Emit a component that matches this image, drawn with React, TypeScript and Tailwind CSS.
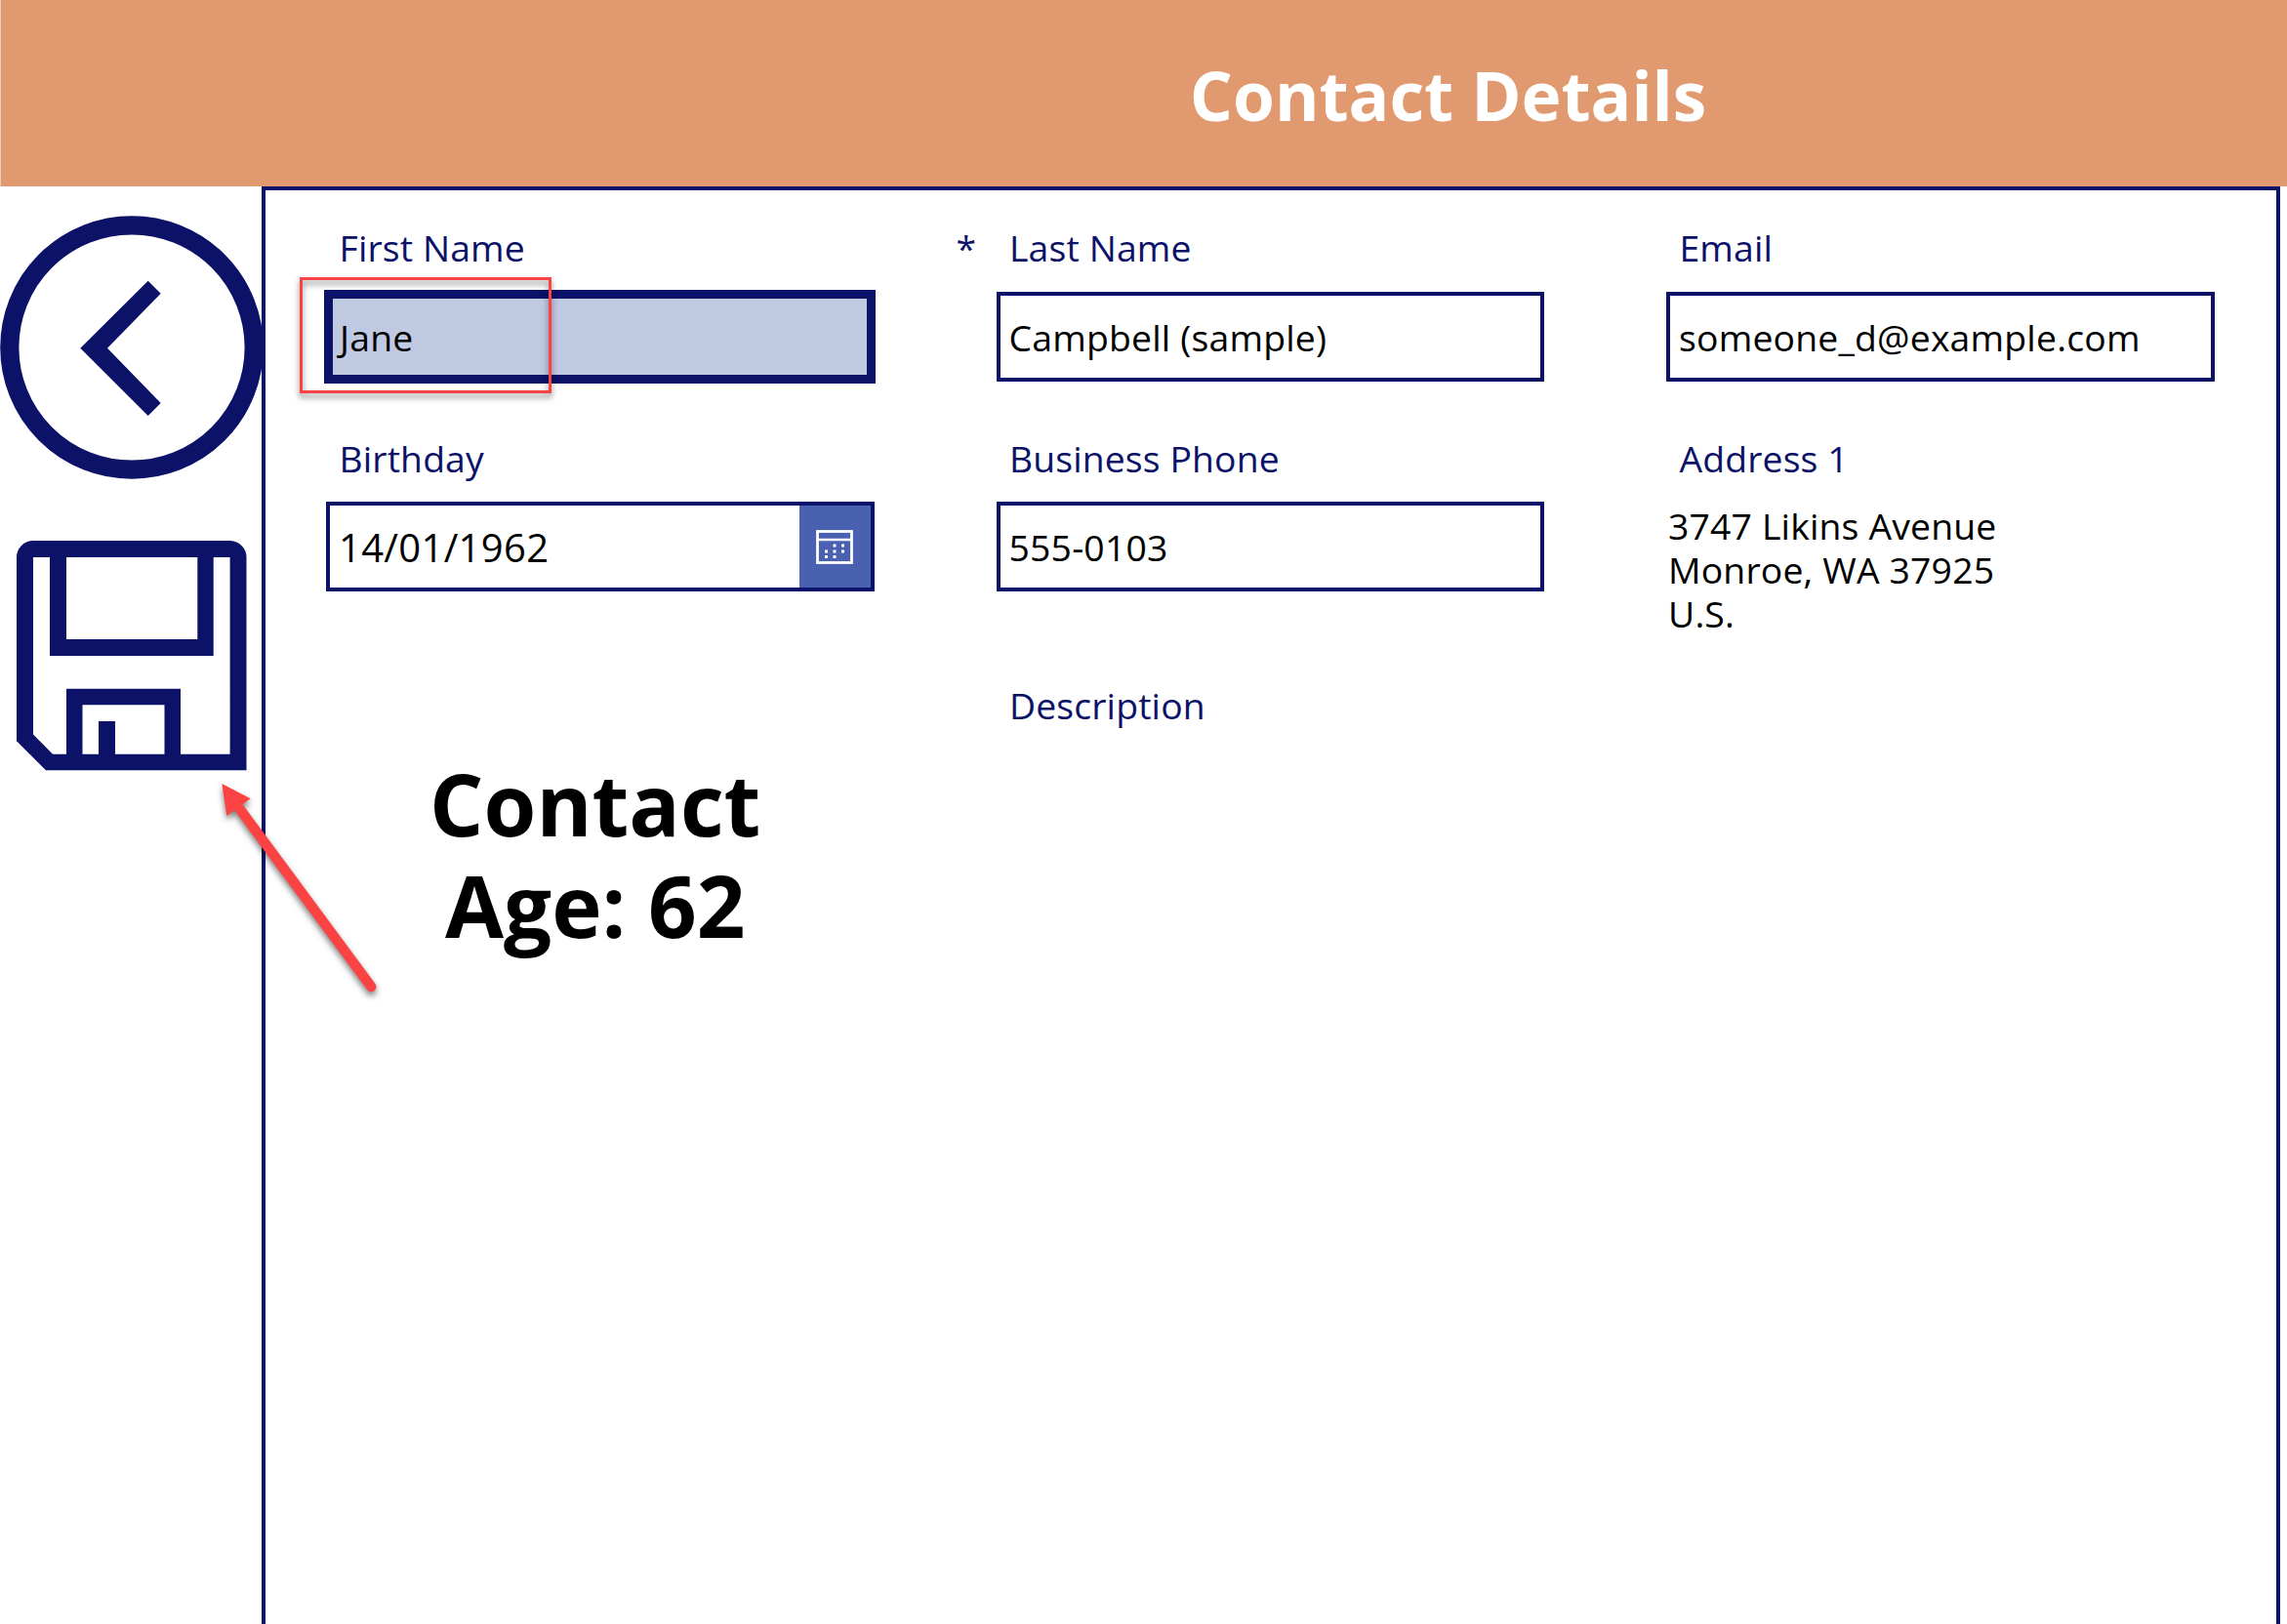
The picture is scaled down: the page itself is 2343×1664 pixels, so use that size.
import type { ReactNode } from "react";

function Label({ children, required }: { children: ReactNode; required?: boolean }) {
  return (
    <div className="relative h-[56px] pl-[13.5px] text-[37.33px] leading-[53px] tracking-[0.13px] text-[#0b1268]">
      {required && <span className="absolute -left-[41px] top-0">*</span>}
      {children}
    </div>
  );
}

function Field({
  label,
  value,
  required,
  boxClass = "mt-[16px] pt-[2px]",
}: {
  label: string;
  value: string;
  required?: boolean;
  boxClass?: string;
}) {
  return (
    <div className="w-[561.5px]">
      <Label required={required}>{label}</Label>
      <div
        className={`flex h-[92px] items-center border-4 border-[#0b1268] pl-[9px] text-[37.33px] tracking-[0.2px] text-black ${boxClass}`}
      >
        {value}
      </div>
    </div>
  );
}

function BackIcon() {
  return (
    <svg width="270" height="270" viewBox="0 0 270 270" className="block" fill="none">
      <circle cx="135" cy="135" r="125.2" stroke="#0b1268" strokeWidth="19.2" />
      <path
        fill="#0b1268"
        d="M151.7 66.7 164.7 79.7 110 135.7 164.7 192 151.7 205 82.3 135.7Z"
      />
    </svg>
  );
}

function SaveIcon() {
  return (
    <svg width="236" height="236" viewBox="0 0 236 236" className="block">
      <path
        fill="#0b1268"
        fillRule="evenodd"
        d="M17 0H219A17 17 0 0 1 235.5 17V235.3H30L0 205.3V17A17 17 0 0 1 17 0ZM17 17V198.5L37 218.7H51V151.7H168V218.7H218.6V17H201.7V118H34V17ZM51 17V101H185.3V17ZM67.5 168.3V218.7H84V185H101V218.7H151.5V168.3Z"
      />
    </svg>
  );
}

function CalendarIcon() {
  const dots = [
    [17.5, 14.5],
    [26, 14.5],
    [9, 20.5],
    [17.5, 20.5],
    [26, 20.5],
    [9, 26],
    [17.5, 26],
  ];
  return (
    <svg width="38" height="35" viewBox="0 0 38 35" fill="none">
      <rect x="1.5" y="1.5" width="35" height="32" stroke="white" strokeWidth="2.8" />
      <path d="M2 10H36" stroke="white" strokeWidth="2.6" />
      {dots.map(([x, y]) => (
        <rect key={`${x}-${y}`} x={x} y={y} width="3" height="3" fill="white" />
      ))}
    </svg>
  );
}

function SaveArrow() {
  return (
    <svg
      className="pointer-events-none absolute left-[200px] top-[780px] overflow-visible drop-shadow-[0px_4px_3px_rgba(0,0,0,0.5)]"
      width="200"
      height="260"
      viewBox="200 780 200 260"
    >
      <path d="M245 828 380.3 1011" stroke="#fc4343" strokeWidth="10.4" strokeLinecap="round" />
      <path d="M227.3 803 256.7 818.3 232.3 836Z" fill="#fc4343" />
    </svg>
  );
}

export default function App() {
  return (
    <div className="relative flex h-[1664px] w-[2343px] flex-col overflow-hidden bg-white font-['Open_Sans',sans-serif]">
      <header className="flex h-[191px] shrink-0 items-center justify-center border-l border-[#efcdb8] bg-[#e19a70] pl-[623px] pt-[4px]">
        <h1 className="text-[69.33px] font-bold leading-none text-white">Contact Details</h1>
      </header>

      <div className="flex min-h-0 flex-1">
        <aside className="flex w-[268px] shrink-0 flex-col">
          <button className="mt-[30px] w-[270px]">
            <BackIcon />
          </button>
          <button className="ml-[17px] mt-[63px] w-[236px]">
            <SaveIcon />
          </button>
        </aside>

        <main className="h-[1500px] w-[2068px] shrink-0 border-4 border-[#0b1268]">
          <div className="grid grid-cols-[686.5px_686.5px_1fr] pl-[62px] pt-[32px]">
            <div className="w-[561.5px]">
              <Label>First Name</Label>
              <div className="relative -ml-[2px] mt-[14px] flex h-[96px] w-[565px] items-center border-9 border-[#0b1268] bg-[#c0c9e2] pl-[7px] pt-[2px] text-[37.33px] tracking-[0.2px] text-black">
                Jane
                <div className="pointer-events-none absolute -left-[34px] -top-[22px] h-[119px] w-[258px] border-3 border-[#fc4343] drop-shadow-[0px_4px_3px_rgba(0,0,0,0.5)]" />
              </div>
            </div>
            <Field label="Last Name" value="Campbell (sample)" required />
            <Field label="Email" value="someone_d@example.com" />
          </div>

          <div className="mt-[50px] grid grid-cols-[686.5px_686.5px_1fr] pl-[62px]">
            <div className="w-[561.5px]">
              <Label>Birthday</Label>
              <div className="mt-[15px] flex h-[92px] border-4 border-[#0b1268] text-[40px] tracking-[0.3px] text-black">
                <span className="flex flex-1 items-center pl-[9px] pt-[2px]">14/01/1962</span>
                <button className="flex w-[73px] items-center justify-center bg-[#4a60b0]">
                  <CalendarIcon />
                </button>
              </div>
              <div className="mt-[165px] pr-[10px] text-center text-[87px] font-bold leading-[104px] text-black">
                Contact
                <br />
                Age: 62
              </div>
            </div>
            <div>
              <Field label="Business Phone" value="555-0103" boxClass="mt-[15px] pt-px" />
              <div className="mt-[90px]">
                <Label>Description</Label>
              </div>
            </div>
            <div>
              <Label>Address 1</Label>
              <div className="mt-[17px] pl-[2px] text-[37.33px] leading-[45.2px] tracking-[0.17px] text-black">
                3747 Likins Avenue
                <br />
                Monroe, WA 37925
                <br />
                U.S.
              </div>
            </div>
          </div>
        </main>
      </div>

      <SaveArrow />
    </div>
  );
}
